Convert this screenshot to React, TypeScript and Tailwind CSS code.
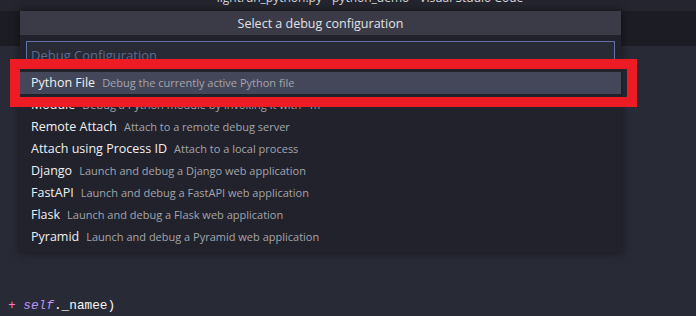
const configs = [
  { label: "Python File", detail: "Debug the currently active Python file" },
  { label: "Module", detail: "Debug a Python module by invoking it with '-m'" },
  { label: "Remote Attach", detail: "Attach to a remote debug server" },
  { label: "Attach using Process ID", detail: "Attach to a local process" },
  { label: "Django", detail: "Launch and debug a Django web application" },
  { label: "FastAPI", detail: "Launch and debug a FastAPI web application" },
  { label: "Flask", detail: "Launch and debug a Flask web application" },
  { label: "Pyramid", detail: "Launch and debug a Pyramid web application" },
];

export default function App() {
  return (
    <div className="relative flex h-[316px] w-[696px] flex-col overflow-hidden bg-[#282a36] font-['Open_Sans',sans-serif]">
      {/* title bar */}
      <div className="flex h-[11px] shrink-0 justify-center overflow-hidden bg-[#24252e]">
        <div className="mt-[-10px] pl-[44px] text-[12px] leading-[16px] text-[#d8d8dc]">
          lightrun_python.py - python_demo - Visual Studio Code
        </div>
      </div>

      {/* tab bar */}
      <div className="h-[35px] shrink-0 bg-[#1c1d24]" />

      {/* editor */}
      <div className="flex-1 pl-[8px] pt-[250px] font-['Liberation_Mono',monospace] text-[12.75px] leading-[19px] text-[#f8f8f2]">
        <span className="text-[#ff79c6]">+</span>{" "}
        <span className="italic text-[#bd93f9]">self</span>._namee)
      </div>

      {/* quick pick */}
      <div className="absolute left-[20px] top-[11px] w-[601px] bg-[#21222c] pb-[4px] shadow-[0_0_8px_2px_rgba(0,0,0,0.35)]">
        <div className="flex h-[24px] items-center justify-center bg-[#3a3b47] pt-[2px] text-[12.5px] text-[#e2e2e6]">
          Select a debug configuration
        </div>
        <div className="px-[6px] pt-[6px] pb-[3px]">
          <div className="flex h-[28px] items-center border border-[#6272a4] bg-[#282a36] px-[4px] pt-[2px] text-[13px] text-[#5f6b8f]">
            Debug Configuration
          </div>
        </div>
        <div className="flex flex-col">
          {configs.map((c, i) => (
            <div
              key={c.label}
              className={`flex h-[22px] items-center gap-[7px] pl-[11px] pt-[1px] ${i === 0 ? "bg-[#44475a]" : ""}`}
            >
              <span className="text-[12.5px] text-[#f0f0f2]">{c.label}</span>
              <span className="text-[11px] text-[#a4a5ad]">{c.detail}</span>
            </div>
          ))}
        </div>
      </div>

      {/* red highlight annotation */}
      <div className="absolute left-[10px] top-[59px] h-[48px] w-[627px] border-[10px] border-[#ed1c24]" />
    </div>
  );
}
